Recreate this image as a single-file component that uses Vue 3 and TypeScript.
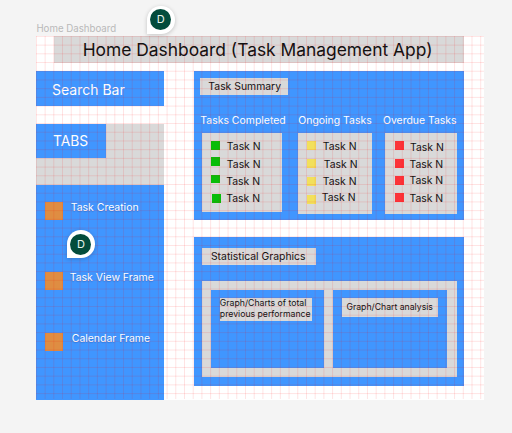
<script setup lang="ts">
interface Task { box: number; text: number; boxX: number; textX: number }
interface TaskList { title: string; kind: string; tasks: Task[] }

const PITCH = 8.712
const columns: number[] = Array.from({ length: 52 }, (_, i) => 0.4 + i * PITCH)
const rows: number[] = Array.from({ length: 42 }, (_, i) => 0.4 + i * PITCH)

// Gaps above each marker and label, plus their small horizontal nudges.
const lists: TaskList[] = [
  {
    title: 'Tasks Completed',
    kind: 'done',
    tasks: [
      { box: 8.5, text: 8, boxX: 0, textX: 0 },
      { box: 7, text: 6, boxX: 0, textX: 0 },
      { box: 8.5, text: 5, boxX: 0, textX: -0.6 },
      { box: 10.5, text: 4.8, boxX: 1, textX: -0.6 },
    ],
  },
  {
    title: 'Ongoing Tasks',
    kind: 'ongoing',
    tasks: [
      { box: 8.5, text: 8, boxX: 0, textX: 0 },
      { box: 9, text: 6.4, boxX: 0, textX: 1 },
      { box: 9, text: 4.6, boxX: 0, textX: 0 },
      { box: 9, text: 4, boxX: 0, textX: -1 },
    ],
  },
  {
    title: 'Overdue Tasks',
    kind: 'overdue',
    tasks: [
      { box: 8.5, text: 8.8, boxX: 0, textX: 0.6 },
      { box: 9, text: 5.6, boxX: 0, textX: 0 },
      { box: 8, text: 3.6, boxX: 0, textX: 0 },
      { box: 8, text: 6.4, boxX: 0, textX: 0 },
    ],
  },
]
const links: string[] = ['Task Creation', 'Task View Frame', 'Calendar Frame']
</script>

<template>
  <main class="canvas">
    <div class="frame-name">Home Dashboard</div>
    <div class="frame">
      <header class="title">Home Dashboard (Task Management App)</header>
      <div class="body">
        <aside class="side">
          <div class="search">Search Bar</div>
          <div class="tabs"><div class="tab">TABS</div></div>
          <nav class="nav">
            <div v-for="(link, i) in links" :key="link" class="link" :class="'link-' + i">
              <i class="icon"></i><span>{{ link }}</span>
            </div>
          </nav>
        </aside>
        <section class="content">
          <div class="panel summary">
            <div class="tag tag-summary">Task Summary</div>
            <div class="lists">
              <div v-for="list in lists" :key="list.title" class="list" :class="list.kind">
                <h3>{{ list.title }}</h3>
                <div class="card">
                  <div class="marks">
                    <i v-for="(t, i) in list.tasks" :key="i" class="mark" :style="{ marginTop: t.box + 'px', marginLeft: t.boxX + 'px' }"></i>
                  </div>
                  <div class="names">
                    <div v-for="(t, i) in list.tasks" :key="i" class="name" :style="{ marginTop: t.text + 'px', marginLeft: t.textX + 'px' }">Task N</div>
                  </div>
                </div>
              </div>
            </div>
          </div>
          <div class="panel stats">
            <div class="tag tag-stats">Statistical Graphics</div>
            <div class="charts">
              <div class="chart"><div class="note note-total">Graph/Charts of total<br />previous performance</div></div>
              <div class="chart"><div class="note note-analysis">Graph/Chart analysis</div></div>
            </div>
          </div>
        </section>
      </div>
      <svg class="grid" width="448" height="363" viewBox="0 0 448 363">
        <line v-for="x in columns" :key="'c' + x" :x1="x" :x2="x" y1="0" y2="363" />
        <line v-for="y in rows" :key="'r' + y" x1="0" x2="448" :y1="y" :y2="y" />
      </svg>
    </div>
    <div class="pin pin-top"><span>D</span></div>
    <div class="pin pin-side"><span>D</span></div>
  </main>
</template>

<style>
body { background: #f4f4f4; overflow: hidden; }
</style>

<style scoped>
.canvas {
  position: relative;
  box-sizing: border-box;
  width: 512px;
  height: 433px;
  padding: 22px 0 0 36.4px;
  background: #f4f4f4;
  font-family: Inter, "Liberation Sans", sans-serif;
  color: #111;
  white-space: nowrap;
}
.frame-name { height: 14.4px; line-height: 14px; font-size: 9.7px; color: #b9b9b9; }
.frame { position: relative; width: 448px; height: 363.2px; background: #fff; overflow: hidden; }
.title {
  box-sizing: border-box;
  width: 410px;
  height: 26.5px;
  margin-left: 17.6px;
  padding-left: 28.7px;
  background: #d9d9d9;
  font-size: 17.4px;
  line-height: 27px;
}
.body { display: flex; gap: 30.2px; margin-top: 8.6px; }
.side { width: 127.4px; color: #fff; }
.search { height: 34.7px; padding-left: 15.6px; background: #4096ff; font-size: 14px; line-height: 37px; }
.tabs { height: 61px; margin-top: 18px; background: #d9d9d9; }
.tab { box-sizing: border-box; width: 69.6px; height: 34.3px; padding-left: 16.6px; background: #4096ff; font-size: 13.8px; line-height: 35.6px; }
.nav { box-sizing: border-box; height: 215px; padding: 17px 0 0 8.7px; background: #4096ff; }
.link { display: flex; height: 18px; font-size: 10.45px; line-height: 11.4px; text-shadow: 0 1px 1px rgba(0, 40, 120, .25); }
.icon { width: 17.7px; height: 17.7px; margin-right: 8px; background: #df8d42; }
.link-1 { margin-top: 52px; }
.link-1 .icon { margin-right: 7px; }
.link-2 { margin-top: 43px; }
.link-2 .icon { margin-right: 9px; }
.content { display: flex; flex-direction: column; gap: 17.5px; }
.panel { box-sizing: border-box; width: 270px; height: 148.3px; background: #4096ff; }
.tag { box-sizing: border-box; height: 17.5px; background: #d9d9d9; font-size: 10.4px; line-height: 17px; }
.summary { padding: 6.2px 0 0 6.4px; }
.tag-summary { width: 87.8px; padding-left: 8px; }
.lists { display: flex; margin-top: 18.2px; }
.list h3 { margin: 0; height: 19.6px; font-size: 10.45px; font-weight: 400; line-height: 15.4px; color: #fff; }
.card { display: flex; height: 81.3px; margin-left: 2px; background: #d9d9d9; color: #111; }
.done { width: 97.9px; }
.done .card { width: 79.6px; height: 78.6px; }
.ongoing { width: 84.7px; }
.ongoing .card { width: 74px; margin-left: 0; }
.overdue .card { width: 72px; }
.marks { width: 24.5px; padding-left: 8.8px; box-sizing: border-box; }
.overdue .marks { padding-left: 9.8px; }
.mark { display: block; width: 8.8px; height: 8.8px; background: #08bd08; }
.ongoing .mark { background: #f2e05c; }
.overdue .mark { background: #fb3439; }
.name { height: 12px; font-size: 10.4px; line-height: 12.6px; }
.stats { padding: 10.7px 0 0 8.4px; }
.tag-stats { width: 113.7px; padding-left: 8.6px; }
.charts { box-sizing: border-box; display: flex; gap: 9px; width: 255px; height: 96px; margin-top: 15.6px; padding: 9px 0 0 8.8px; background: #d9d9d9; }
.chart { box-sizing: border-box; width: 113.3px; height: 78px; padding: 8px 0 0 8.7px; background: #4096ff; }
.note { box-sizing: border-box; background: #d9d9d9; font-size: 8.7px; }
.note-total { width: 92px; height: 23px; line-height: 10.8px; }
.note-analysis { width: 96.2px; height: 18.7px; padding-left: 4.3px; line-height: 18.6px; }
.grid { position: absolute; left: 0; top: 0; }
.grid line { stroke: #ff0000; stroke-opacity: .125; stroke-width: .9; }
.pin {
  position: absolute;
  box-sizing: border-box;
  width: 27.5px;
  height: 27.5px;
  padding: 3.2px;
  background: #fff;
  border-radius: 50% 50% 50% 0;
  box-shadow: 0 1px 4px rgba(0, 0, 0, .2);
}
.pin span {
  display: block;
  width: 21px;
  height: 21px;
  border-radius: 50%;
  background: #034c3c;
  color: #e6f4ef;
  font-size: 11px;
  line-height: 21px;
  text-align: center;
}
.pin-top { left: 147px; top: 6.2px; }
.pin-side { left: 67.2px; top: 230.4px; }
</style>
